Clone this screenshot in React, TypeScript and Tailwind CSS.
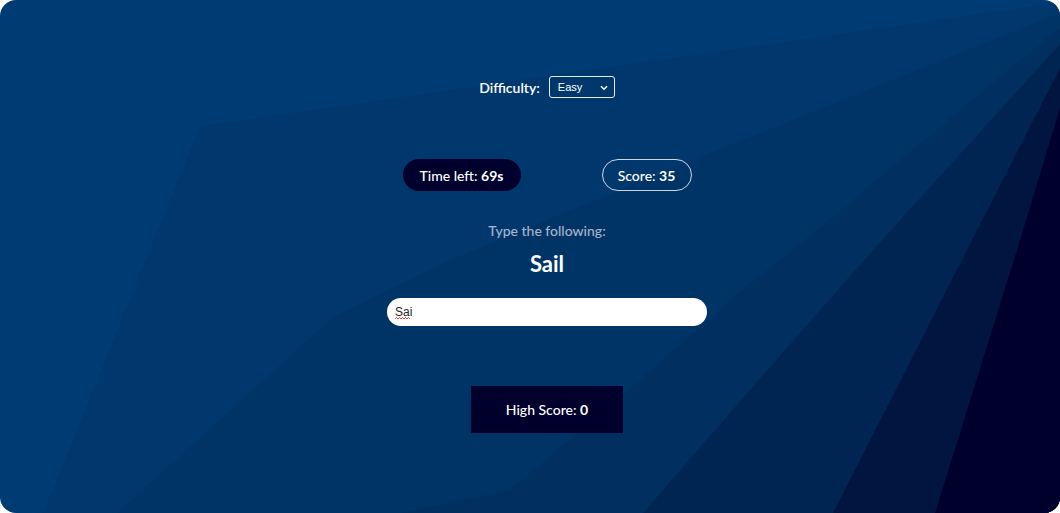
import React from 'react';

const layers = [
  { fill: '#00386e', points: '1060,2 200,126 43,513 1060,513' },
  { fill: '#003467', points: '1060,13 700,157 450,260 333,317 117,513 1060,513' },
  { fill: '#002f60', points: '1060,27 793,250 750,283 640,380 510,490 400,513 1060,513' },
  { fill: '#002552', points: '1060,44 873,250 750,390 643,513 1060,513' },
  { fill: '#001640', points: '1060,68 967,250 833,513 1060,513' },
  { fill: '#00002c', points: '1060,108 1017,250 935,513 1060,513' },
];

const Backdrop: React.FC = () => (
  <svg
    className="absolute inset-0 w-full h-full"
    viewBox="0 0 1060 513"
    preserveAspectRatio="none"
  >
    <rect width="1060" height="513" fill="#003c74" />
    {layers.map((l) => (
      <polygon key={l.points} points={l.points} fill={l.fill} />
    ))}
  </svg>
);

export default function App() {
  return (
    <div className="w-[1060px] h-[513px] bg-white">
      <div
        className="relative w-full h-full overflow-hidden rounded-[16px] text-white"
        style={{ fontFamily: 'Lato, "Open Sans", sans-serif' }}
      >
        <Backdrop />

        <div className="relative flex flex-col items-center pt-[76px] pl-[34px]">
          <div className="flex items-center gap-[9px] h-[22px]">
            <span className="text-[14px] font-semibold">Difficulty:</span>
            <div className="relative w-[66px] h-[22px] rounded-[3px] border border-white/90 flex items-center">
              <span
                className="pl-[8px] text-[11px] text-white"
                style={{ fontFamily: '"Liberation Sans", Arial, sans-serif' }}
              >
                Easy
              </span>
              <svg className="absolute right-[6px] top-[8px]" width="8" height="6" viewBox="0 0 8 6">
                <path d="M1 1.2 L4 4.2 L7 1.2" stroke="white" strokeWidth="1.6" fill="none" />
              </svg>
            </div>
          </div>

          <div className="flex items-center gap-[81px] mt-[61px]">
            <div className="h-[32px] w-[118px] rounded-full bg-[#00002c] flex items-center justify-center text-[14px] font-medium">
              Time left:&nbsp;<b className="font-bold">69s</b>
            </div>
            <div className="h-[32px] w-[90px] rounded-full border border-white/80 flex items-center justify-center text-[14px] font-medium">
              Score:&nbsp;<b className="font-bold">35</b>
            </div>
          </div>

          <p className="mt-[30px] h-[20px] leading-[20px] text-[14px] font-medium text-[#a8b5c9]">
            Type the following:
          </p>
          <h1 className="mt-[9px] h-[28px] leading-[28px] text-[22px] font-bold">Sail</h1>

          <div className="relative mt-[20px]">
            <input
              defaultValue="Sai"
              spellCheck={false}
              className="block w-[320px] h-[28px] rounded-full bg-white px-[8px] text-[12px] text-[#222] outline-none"
              style={{ fontFamily: '"Liberation Sans", Arial, sans-serif' }}
            />
            {/* spell-check squiggle under the typed word */}
            <svg className="absolute left-[8px] top-[19px]" width="16" height="3" viewBox="0 0 16 3">
              <path d="M0 2 L1.5 0.5 L3 2 L4.5 0.5 L6 2 L7.5 0.5 L9 2 L10.5 0.5 L12 2 L13.5 0.5 L15 2" stroke="#e0302a" strokeWidth="0.9" fill="none" />
            </svg>
          </div>

          <div className="mt-[60px] w-[152px] h-[47px] bg-[#00002c] flex items-center justify-center text-[14px] font-medium">
            High Score:&nbsp;<b className="font-bold">0</b>
          </div>
        </div>
      </div>
    </div>
  );
}
